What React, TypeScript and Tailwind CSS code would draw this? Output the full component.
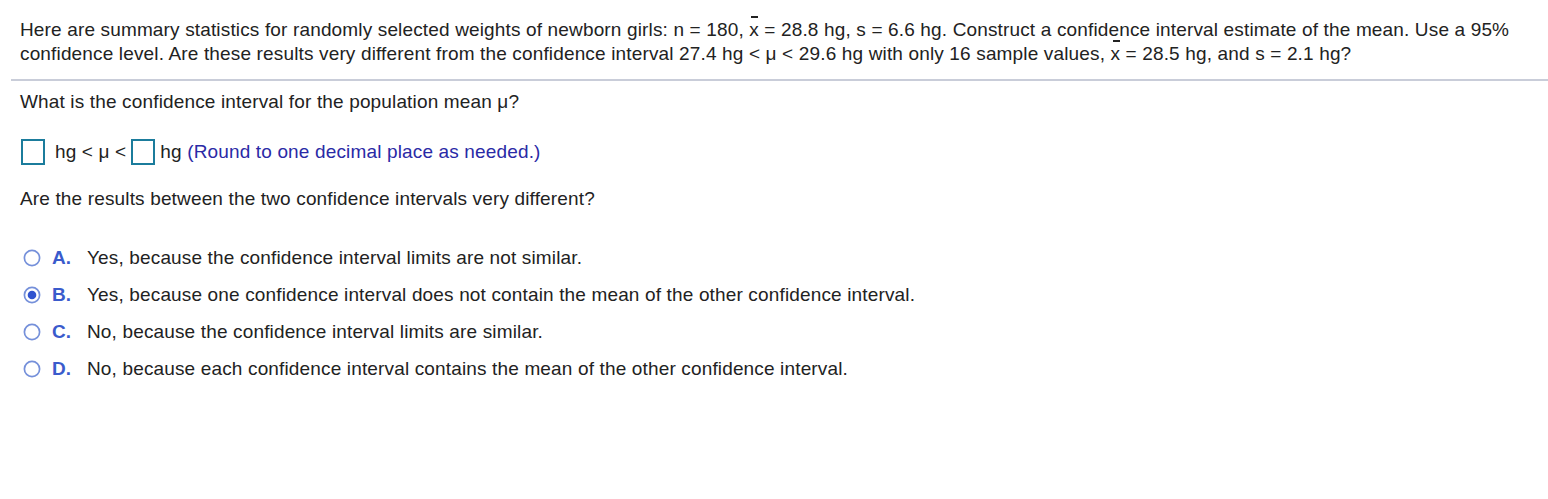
import React from "react";

function XBar() {
  return (
    <span className="relative inline-block">
      x
      <span className="absolute left-[2px] top-[-2px] h-[2px] w-[7px] bg-[#222]" />
    </span>
  );
}

function Radio({ checked }: { checked?: boolean }) {
  return (
    <svg width="18" height="18" viewBox="0 0 18 18" className="shrink-0">
      <circle cx="9" cy="9" r="7.6" fill="white" stroke="#7590da" strokeWidth="1.7" />
      {checked && <circle cx="9" cy="9" r="4.3" fill="#2f53cf" />}
    </svg>
  );
}

function Box() {
  return <span className="inline-block h-[26px] w-[24px] shrink-0 border-2 border-[#1b7c9c]" />;
}

const options = [
  { k: "A.", t: "Yes, because the confidence interval limits are not similar." },
  { k: "B.", t: "Yes, because one confidence interval does not contain the mean of the other confidence interval.", checked: true },
  { k: "C.", t: "No, because the confidence interval limits are similar." },
  { k: "D.", t: "No, because each confidence interval contains the mean of the other confidence interval." },
];

export default function App() {
  return (
    <div className="h-[499px] w-[1548px] bg-white font-['Liberation_Sans',Arial,sans-serif] text-[19px] leading-[24px] tracking-[0.15px] text-[#222]">
      <div className="px-5 pt-[18px]">
        <p className="whitespace-nowrap">
          Here are summary statistics for randomly selected weights of newborn girls: n = 180, <XBar /> = 28.8 hg, s = 6.6 hg. Construct a confidence interval estimate of the mean. Use a 95%
          <br />
          confidence level. Are these results very different from the confidence interval 27.4 hg &lt; μ &lt; 29.6 hg with only 16 sample values, <XBar /> = 28.5 hg, and s = 2.1 hg?
        </p>
      </div>
      <div className="ml-[11px] mt-[13px] h-[2px] bg-[#c9cdd9]" />
      <div className="px-5">
        <p className="mt-[9px]">What is the confidence interval for the population mean μ?</p>
        <div className="mt-[25px] flex items-center pl-[1px]">
          <Box />
          <span className="ml-[10px]">hg &lt; μ &lt;</span>
          <span className="ml-[5px] flex">
            <Box />
          </span>
          <span className="ml-[5px]">
            hg <span className="text-[#2a2aa6]">(Round to one decimal place as needed.)</span>
          </span>
        </div>
        <p className="mt-[22px]">Are the results between the two confidence intervals very different?</p>
        <div className="mt-[35px] flex flex-col gap-[13px]">
          {options.map((o) => (
            <div key={o.k} className="flex items-center">
              <span className="ml-[3px] w-[29px]">
                <Radio checked={o.checked} />
              </span>
              <span className="w-[35px] font-bold text-[#3a5bcc]">{o.k}</span>
              <span>{o.t}</span>
            </div>
          ))}
        </div>
      </div>
    </div>
  );
}
